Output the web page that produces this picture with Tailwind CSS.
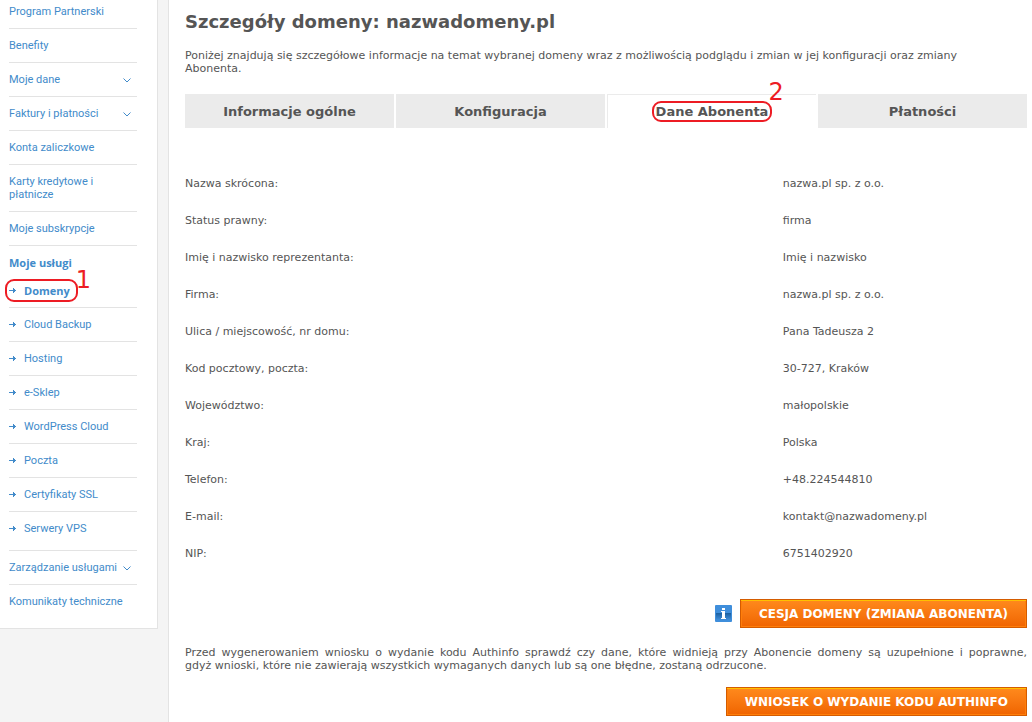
<!DOCTYPE html>
<html lang="pl">
  <head>
    <meta charset="UTF-8" />
    <meta name="viewport" content="width=device-width, initial-scale=1.0" />
    <title>Szczegóły domeny: nazwadomeny.pl</title>
    <script src="https://cdn.jsdelivr.net/npm/@tailwindcss/browser@4"></script>
  </head>
  <body class="flex min-h-screen items-stretch bg-[#f4f4f4] font-[Verdana,'DejaVu_Sans',sans-serif] text-[11px] leading-[13px] text-[#555]">
    <svg class="hidden">
      <symbol id="arrow" viewBox="0 0 7 7" shape-rendering="crispEdges">
        <path d="M0 3h7v1H0zM4 1h1v5H4zM5 2h1v3H5z" fill="currentColor" />
      </symbol>
      <symbol id="chevron" viewBox="0 0 8 5">
        <path d="M.5 .5 4 4 7.500 .5" fill="none" stroke="currentColor" />
      </symbol>
    </svg>

    <nav class="w-[158px] shrink-0 self-start border-r border-b border-[#e3e3e3] bg-white pt-[5px] pr-5 pb-5 pl-[9px] font-[Roboto,'DejaVu_Sans',sans-serif] text-[#428bca]">
      <ul>
        <li class="border-b border-[#e3e3e3] pb-[10px]"><a href="#">Program Partnerski</a></li>
        <li class="border-b border-[#e3e3e3] py-[10px]"><a href="#">Benefity</a></li>
        <li class="border-b border-[#e3e3e3] py-[10px]">
          <a href="#" class="flex items-center justify-between pr-[6px]">Moje dane <svg class="mt-[2px] h-[5px] w-2"><use href="#chevron" /></svg></a>
        </li>
        <li class="border-b border-[#e3e3e3] py-[10px]">
          <a href="#" class="flex items-center justify-between pr-[6px]">Faktury i płatności <svg class="mt-[2px] h-[5px] w-2"><use href="#chevron" /></svg></a>
        </li>
        <li class="border-b border-[#e3e3e3] py-[10px]"><a href="#">Konta zaliczkowe</a></li>
        <li class="border-b border-[#e3e3e3] py-[10px]"><a href="#" class="block pr-8">Karty kredytowe i płatnicze</a></li>
        <li class="border-b border-[#e3e3e3] py-[10px]"><a href="#">Moje subskrypcje</a></li>
        <li class="pt-[10px]">
          <a href="#" class="block font-['Open_Sans','DejaVu_Sans',sans-serif] font-bold">Moje usługi</a>
          <ul class="pt-[5px]">
            <li class="border-b border-[#e3e3e3] py-[10px]">
              <a href="#" class="relative flex w-fit items-center gap-2 font-['Open_Sans','DejaVu_Sans',sans-serif] font-bold">
                <svg class="size-[7px]"><use href="#arrow" /></svg>Domeny
                <span class="absolute -inset-y-[5px] -right-2 -left-1 rounded-[9px] border-2 border-[#ed1c24]"></span>
                <span class="absolute -top-4 left-full ml-[6px] font-['DejaVu_Sans',sans-serif] text-2xl leading-6 font-normal text-[#ed1c24]">1</span>
              </a>
            </li>
            <li class="border-b border-[#e3e3e3] py-[10px]">
              <a href="#" class="flex items-center gap-2"><svg class="size-[7px]"><use href="#arrow" /></svg>Cloud Backup</a>
            </li>
            <li class="border-b border-[#e3e3e3] py-[10px]">
              <a href="#" class="flex items-center gap-2"><svg class="size-[7px]"><use href="#arrow" /></svg>Hosting</a>
            </li>
            <li class="border-b border-[#e3e3e3] py-[10px]">
              <a href="#" class="flex items-center gap-2"><svg class="size-[7px]"><use href="#arrow" /></svg>e-Sklep</a>
            </li>
            <li class="border-b border-[#e3e3e3] py-[10px]">
              <a href="#" class="flex items-center gap-2"><svg class="size-[7px]"><use href="#arrow" /></svg>WordPress Cloud</a>
            </li>
            <li class="border-b border-[#e3e3e3] py-[10px]">
              <a href="#" class="flex items-center gap-2"><svg class="size-[7px]"><use href="#arrow" /></svg>Poczta</a>
            </li>
            <li class="border-b border-[#e3e3e3] py-[10px]">
              <a href="#" class="flex items-center gap-2"><svg class="size-[7px]"><use href="#arrow" /></svg>Certyfikaty SSL</a>
            </li>
            <li class="border-b border-[#e3e3e3] pt-[10px] pb-[15px]">
              <a href="#" class="flex items-center gap-2"><svg class="size-[7px]"><use href="#arrow" /></svg>Serwery VPS</a>
            </li>
          </ul>
        </li>
        <li class="border-b border-[#e3e3e3] py-[10px]">
          <a href="#" class="flex items-center justify-between pr-[6px] whitespace-nowrap">Zarządzanie usługami <svg class="mt-[2px] h-[5px] w-2"><use href="#chevron" /></svg></a>
        </li>
        <li class="pt-[10px]"><a href="#">Komunikaty techniczne</a></li>
      </ul>
    </nav>

    <main class="ml-[10px] min-w-0 flex-1 border-l border-[#e3e3e3] bg-white pt-[10px] pr-[5px] pb-[6px] pl-4">
      <h1 class="text-lg leading-6 font-bold">Szczegóły domeny: nazwadomeny.pl</h1>
      <p class="mt-[15px] pr-6">
        Poniżej znajdują się szczegółowe informacje na temat wybranej domeny wraz z możliwością podglądu i zmian w jej konfiguracji oraz zmiany Abonenta.
      </p>

      <div class="mt-[19px] grid grid-cols-4 gap-[2px] text-[13px] font-bold">
        <button type="button" class="h-[34px] bg-[#ebebeb]">Informacje ogólne</button>
        <button type="button" class="h-[34px] bg-[#ebebeb]">Konfiguracja</button>
        <button type="button" class="h-[34px] border-t border-l border-[#ebebeb] bg-white">
          <span class="relative">
            Dane Abonenta
            <span class="absolute -inset-x-1 -inset-y-[3px] rounded-[9px] border-2 border-[#ed1c24]"></span>
            <span class="absolute -top-6 left-full text-2xl leading-6 font-normal text-[#ed1c24]">2</span>
          </span>
        </button>
        <button type="button" class="h-[34px] bg-[#ebebeb]">Płatności</button>
      </div>

      <table class="mt-[37px] w-full table-fixed text-left">
        <colgroup>
          <col class="w-[71%]" />
          <col />
        </colgroup>
        <tbody>
          <tr class="h-[37px]"><th scope="row" class="font-normal">Nazwa skrócona:</th><td>nazwa.pl sp. z o.o.</td></tr>
          <tr class="h-[37px]"><th scope="row" class="font-normal">Status prawny:</th><td>firma</td></tr>
          <tr class="h-[37px]"><th scope="row" class="font-normal">Imię i nazwisko reprezentanta:</th><td>Imię i nazwisko</td></tr>
          <tr class="h-[37px]"><th scope="row" class="font-normal">Firma:</th><td>nazwa.pl sp. z o.o.</td></tr>
          <tr class="h-[37px]"><th scope="row" class="font-normal">Ulica / miejscowość, nr domu:</th><td>Pana Tadeusza 2</td></tr>
          <tr class="h-[37px]"><th scope="row" class="font-normal">Kod pocztowy, poczta:</th><td>30-727, Kraków</td></tr>
          <tr class="h-[37px]"><th scope="row" class="font-normal">Województwo:</th><td>małopolskie</td></tr>
          <tr class="h-[37px]"><th scope="row" class="font-normal">Kraj:</th><td>Polska</td></tr>
          <tr class="h-[37px]"><th scope="row" class="font-normal">Telefon:</th><td>+48.224544810</td></tr>
          <tr class="h-[37px]"><th scope="row" class="font-normal">E-mail:</th><td>kontakt@nazwadomeny.pl</td></tr>
          <tr class="h-[37px]"><th scope="row" class="font-normal">NIP:</th><td>6751402920</td></tr>
        </tbody>
      </table>

      <div class="mt-[27px] flex items-center justify-end gap-2">
        <svg class="size-[17px]" viewBox="0 0 17 17" role="img" aria-label="Informacja">
          <defs>
            <linearGradient id="info" x1="0" y1="0" x2="0" y2="1">
              <stop offset="0" stop-color="#1b5f9f" />
              <stop offset="1" stop-color="#3f8edb" />
            </linearGradient>
          </defs>
          <rect width="17" height="17" rx="1" fill="#3f8edb" />
          <path d="M1 8h15v7H1z" fill="url(#info)" />
          <path d="M7 3h3v2H7zM6 6h4v7h1v1H6v-1h1V7H6z" fill="#fff" />
        </svg>
        <button type="button" class="h-[29px] border border-[#d45b00] bg-linear-to-b from-[#ff8a1c] to-[#f06400] px-[18px] text-xs font-bold text-white shadow-[inset_0_1px_0_#ffc000,inset_0_0_0_1px_#ff7e0a]">CESJA DOMENY (ZMIANA ABONENTA)</button>
      </div>

      <p class="mt-[18px] text-justify">
        Przed wygenerowaniem wniosku o wydanie kodu Authinfo sprawdź czy dane, które widnieją przy Abonencie domeny są uzupełnione i poprawne, gdyż&nbsp;wnioski, które nie zawierają wszystkich wymaganych danych lub są one błędne, zostaną odrzucone.
      </p>

      <div class="mt-[15px] flex justify-end">
        <button type="button" class="h-[29px] border border-[#d45b00] bg-linear-to-b from-[#ff8a1c] to-[#f06400] px-[18px] text-xs font-bold text-white shadow-[inset_0_1px_0_#ffc000,inset_0_0_0_1px_#ff7e0a]">WNIOSEK O WYDANIE KODU AUTHINFO</button>
      </div>
    </main>
  </body>
</html>
